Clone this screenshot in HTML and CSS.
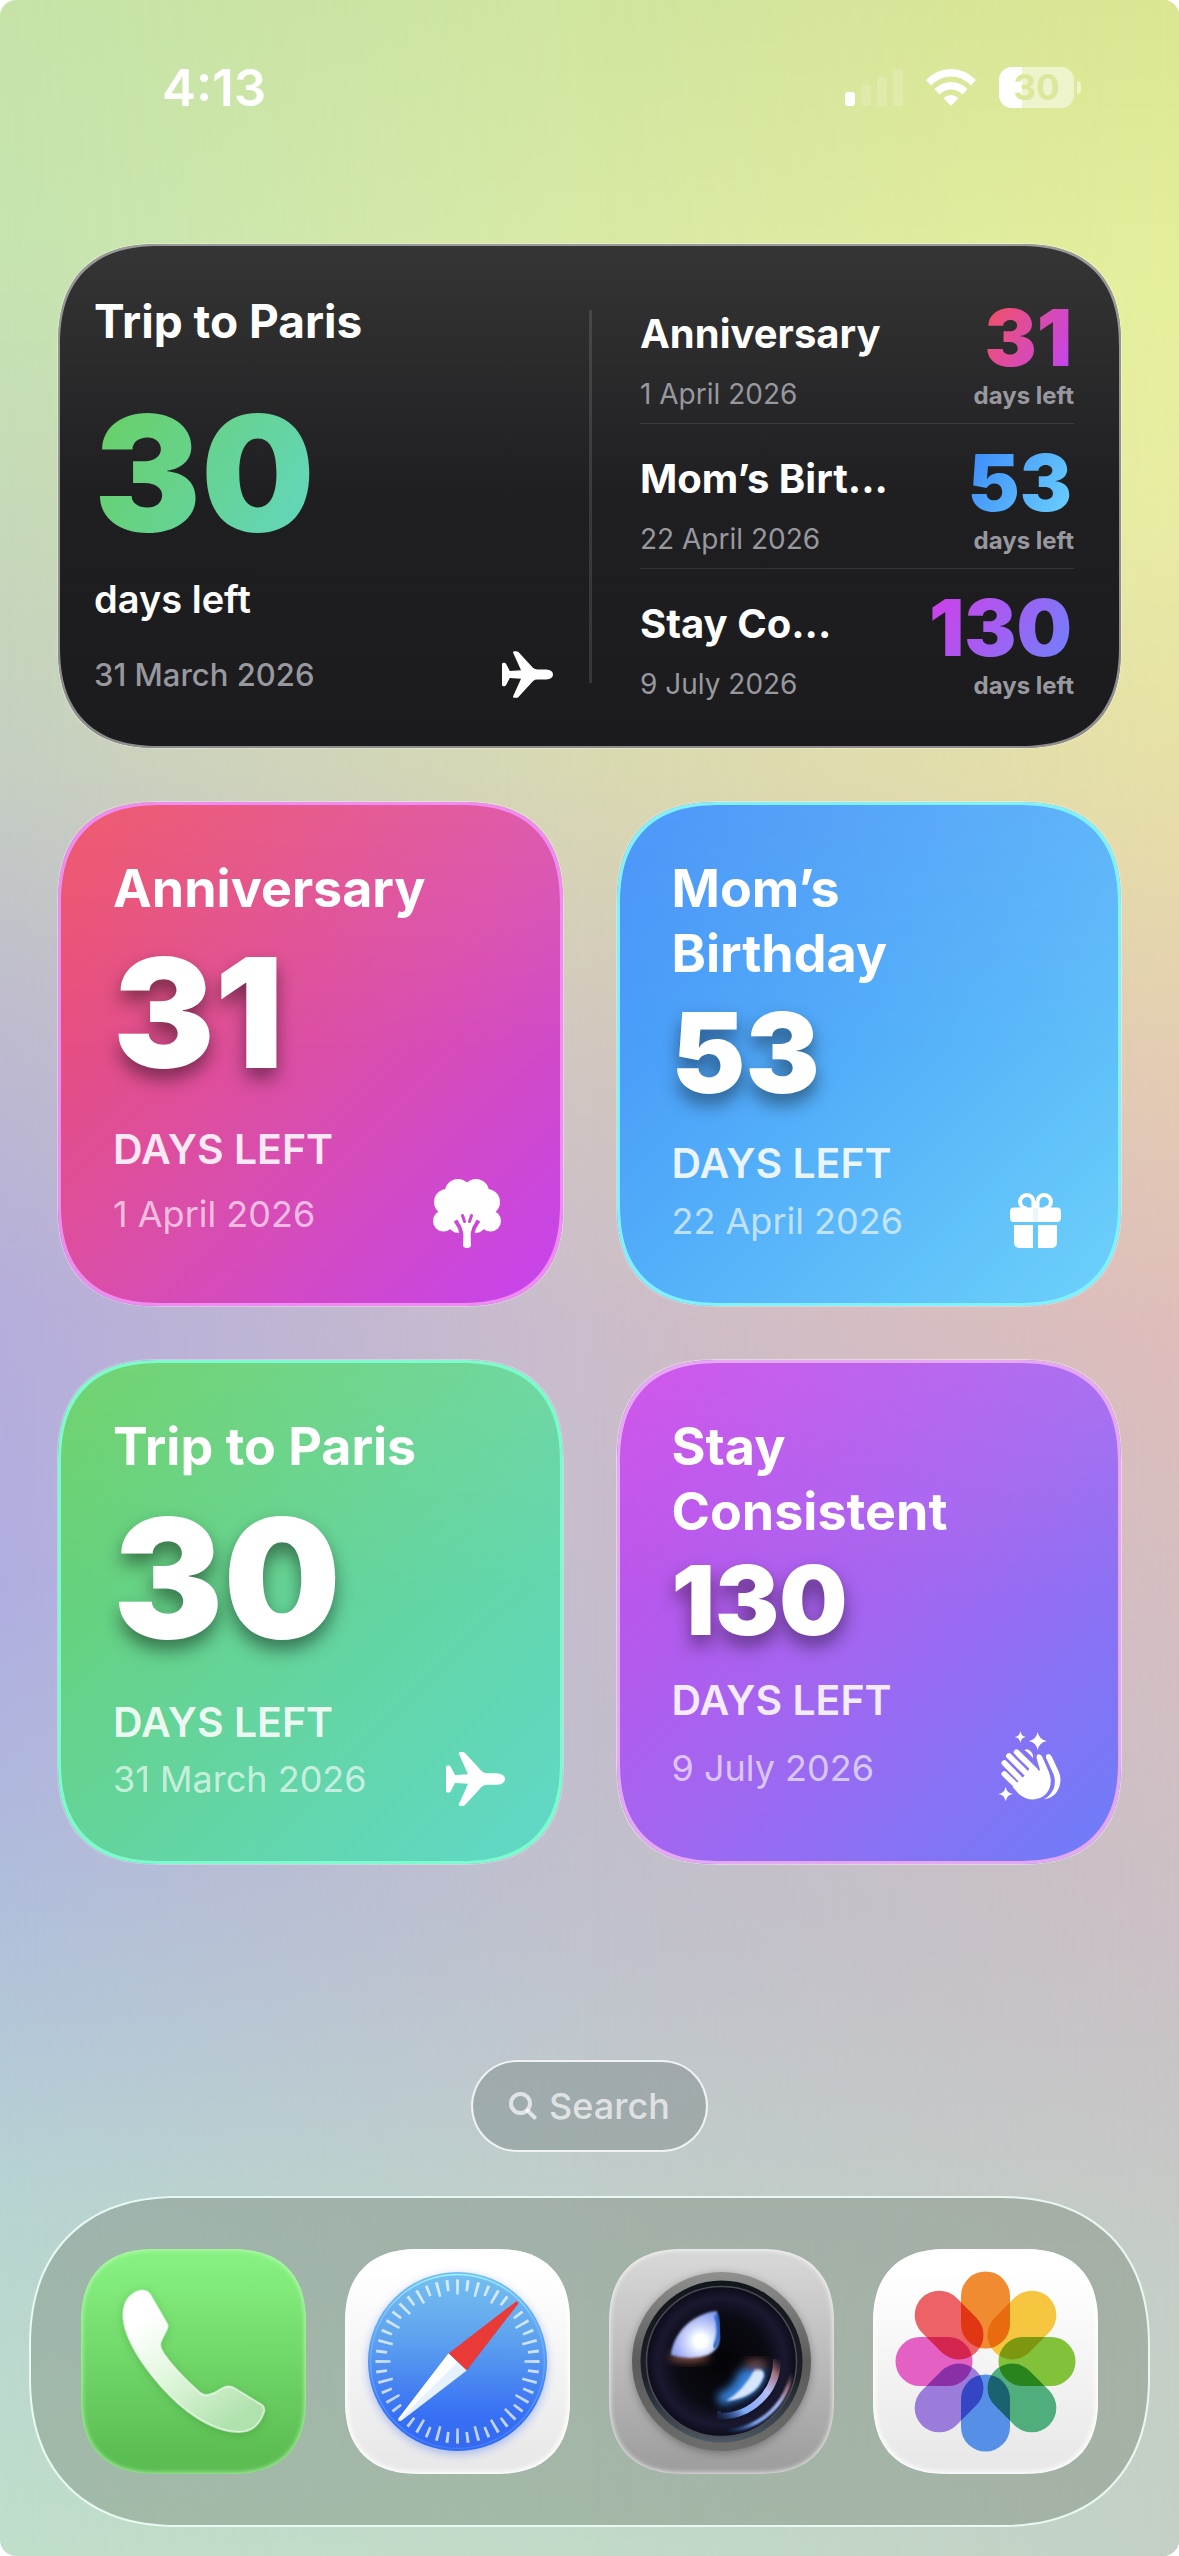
FILE: index.html
```html
<!DOCTYPE html>
<html lang="en">
<head>
<meta charset="utf-8">
<meta name="viewport" content="width=device-width, initial-scale=1">
<title>Home Screen</title>
<link rel="stylesheet" href="styles.css">
</head>
<body>
<svg class="defs" aria-hidden="true">
  <defs>
    <symbol id="plane" viewBox="0 0 59 54">
      <path d="M0 15Q0 13.500 1.500 13.500L3 13.500Q4 13.500 4.800 14.800L9 23L22 22.200L13 2Q12.200 0 14.500 0L16 0Q18 0 19 1L36 19.500Q38 21.200 41 21.200L51 21.200Q59 22 59 27Q59 32 51 32.800L41 32.800Q38 32.800 36 34.500L19 53Q18 54 16 54L14.500 54Q12.200 54 13 52L22 31.800L9 31L4.800 39.200Q4 40.500 3 40.500L1.500 40.500Q0 40.500 0 39Z"/>
    </symbol>
  </defs>
</svg>
<div class="screen">
  <header class="status">
    <time class="clock">4:13</time>
    <div class="indicators">
      <svg class="signal" viewBox="0 0 58 38" role="img" aria-label="Signal: one bar">
        <rect x="0" y="23" width="10" height="14" rx="3"/>
        <g opacity=".16">
          <rect x="16" y="16" width="10" height="21" rx="3"/>
          <rect x="32" y="8" width="10" height="29" rx="3"/>
          <rect x="48" y="0" width="10" height="37" rx="3"/>
        </g>
      </svg>
      <svg class="wifi" viewBox="0 0 50 38" role="img" aria-label="Wi-Fi">
        <path d="M0 11Q11 0 25 0T50 11L45 16.500Q36 7.500 25 7.500T5 16.500Z"/>
        <path d="M8.500 20Q16 13 25 13T41.500 20L36.500 25.500Q31.500 20.500 25 20.500T13.500 25.500Z"/>
        <path d="M17.500 29Q21 26 25 26T32.500 29L25 37Z"/>
      </svg>
      <div class="battery">
        <span class="battery-body">30</span>
        <span class="battery-cap"></span>
      </div>
    </div>
  </header>

  <main class="widgets">
    <section class="widget overview">
      <div class="featured">
        <h2 class="featured-title">Trip to Paris</h2>
        <p class="featured-count"><span class="ink green-ink">30</span></p>
        <p class="featured-unit">days left</p>
        <div class="featured-foot">
          <time class="featured-date">31 March 2026</time>
          <svg class="plane-small" aria-hidden="true"><use href="#plane"/></svg>
        </div>
      </div>
      <ul class="upcoming">
        <li class="event">
          <div class="event-text">
            <h3 class="event-title">Anniversary</h3>
            <time class="event-date">1 April 2026</time>
          </div>
          <div class="event-count">
            <span class="event-number ink pink-ink">31</span>
            <span class="event-unit">days left</span>
          </div>
        </li>
        <li class="event">
          <div class="event-text">
            <h3 class="event-title">Mom’s Birt...</h3>
            <time class="event-date">22 April 2026</time>
          </div>
          <div class="event-count">
            <span class="event-number ink blue-ink">53</span>
            <span class="event-unit">days left</span>
          </div>
        </li>
        <li class="event">
          <div class="event-text">
            <h3 class="event-title">Stay Co...</h3>
            <time class="event-date">9 July 2026</time>
          </div>
          <div class="event-count">
            <span class="event-number ink purple-ink">130</span>
            <span class="event-unit">days left</span>
          </div>
        </li>
      </ul>
    </section>

    <section class="widget card pink">
      <h2 class="card-title">Anniversary</h2>
      <p class="card-count large">31</p>
      <p class="card-unit">DAYS LEFT</p>
      <div class="card-foot">
        <time class="card-date">1 April 2026</time>
        <svg class="icon tree" viewBox="-4 0 76 69" aria-hidden="true">
          <mask id="crown">
            <g fill="#fff">
              <circle cx="25" cy="13" r="13"/><circle cx="43" cy="13" r="13"/>
              <circle cx="14" cy="23" r="13"/><circle cx="54" cy="23" r="13"/>
              <circle cx="10.500" cy="42" r="10.500"/><circle cx="57.500" cy="42" r="10.500"/>
              <circle cx="26" cy="42" r="12"/><circle cx="42" cy="42" r="12"/>
              <rect x="10" y="12" width="48" height="32" rx="8"/>
            </g>
            <path d="M22.500 41.500L27 49L29 57M45.500 41.500L41 49L39 57M34 50V57" fill="none" stroke="#000" stroke-width="4"/>
          </mask>
          <rect width="68" height="69" mask="url(#crown)"/>
          <path d="M30 66Q30 69 34 69T38 66L37.600 56Q38 49 42 43L34 41L26 43Q30 49 30.400 56Z"/>
          <path class="tree-gap" d="M29.500 36.500L31.500 42.500M38.500 36.500L36.500 42.500"/>
        </svg>
      </div>
    </section>

    <section class="widget card blue">
      <h2 class="card-title">Mom’s<br>Birthday</h2>
      <p class="card-count medium">53</p>
      <p class="card-unit">DAYS LEFT</p>
      <div class="card-foot">
        <time class="card-date">22 April 2026</time>
        <svg class="icon gift" viewBox="-2 0 55 55" aria-hidden="true">
          <path d="M23.500 15V8.700A6.700 6.700 0 1 0 17 15.500M27.500 15V8.700A6.700 6.700 0 1 1 34 15.500" fill="none" stroke="#fff" stroke-width="4"/>
          <path d="M4 14.500H23V29H4Q0 29 0 25V18.500Q0 14.500 4 14.500ZM28 14.500H47Q51 14.500 51 18.500V25Q51 29 47 29H28ZM4 32H23V55H10Q4 55 4 49ZM28 32H47V49Q47 55 41 55H28Z"/>
          <rect x="23" y="14.500" width="5" height="14.500" opacity=".85"/>
        </svg>
      </div>
    </section>

    <section class="widget card green">
      <h2 class="card-title">Trip to Paris</h2>
      <p class="card-count huge">30</p>
      <p class="card-unit">DAYS LEFT</p>
      <div class="card-foot">
        <time class="card-date">31 March 2026</time>
        <svg class="icon plane" aria-hidden="true"><use href="#plane"/></svg>
      </div>
    </section>

    <section class="widget card purple">
      <h2 class="card-title">Stay<br>Consistent</h2>
      <p class="card-count small">130</p>
      <p class="card-unit">DAYS LEFT</p>
      <div class="card-foot">
        <time class="card-date">9 July 2026</time>
        <svg class="icon clap" viewBox="48 29 201 228" aria-hidden="true">
          <path d="M121 32Q123 48 138 50Q123 52 121 68Q119 52 104 50Q119 48 121 32ZM173 35Q177 58 201 62Q177 66 173 90Q169 66 146 62Q169 58 173 35ZM77 199Q80 218 99 221Q80 224 77 243Q74 224 55 221Q74 218 77 199Z"/>
          <path d="M110 96L165 150M87 107L150 170M73 128L130 186M73 161L122 208" fill="none" stroke="#fff" stroke-width="17" stroke-linecap="round"/>
          <path d="M152 136L174 150Q181 153 179 145L170 114Q168 102 177 102Q183 102 187 110L207 156Q217 182 208 205Q196 232 165 237Q138 240 116 220L98 200L140 160Z"/>
          <path d="M198 112Q196 102 205 101Q212 101 216 110L238 158Q248 190 228 218Q215 234 192 237Q214 224 222 202Q228 180 220 160ZM133 90Q139 84 146 88Q156 94 159 104L158 114Q147 97 133 90Z"/>
        </svg>
      </div>
    </section>
  </main>

  <button class="search" type="button">
    <svg class="search-icon" viewBox="0 0 28 28" aria-hidden="true">
      <circle cx="11.500" cy="11.500" r="9.500"/><path d="M18.500 18.500L25.500 25.500"/>
    </svg>
    Search
  </button>

  <nav class="dock" aria-label="Dock">
    <a class="app phone" href="#phone" aria-label="Phone">
      <svg class="art" viewBox="0 0 225 225" aria-hidden="true">
        <defs>
          <linearGradient id="handset" x1="0" y1="0" x2=".7" y2="1"><stop offset=".2" stop-color="#fff"/><stop offset=".55" stop-color="#e2f7de"/><stop offset="1" stop-color="#afe2ac"/></linearGradient>
        </defs>
        <path class="handset" fill="url(#handset)" stroke="#fff" stroke-opacity=".6" stroke-width="2" d="M61.600 41.500C52 42 42.300 50 42.300 66C42.300 90 65 120 80 137C100 160 130 183 158 183C172 183 179 175 183 163C184 160 183 158 181 156L153 139C149 137 146 137 142 139L133 144C127 147 122 147 117 142C105 131 92 118 83 105C79 99 78 95 81 90L86 80C87 77 87 76 85 73L70 47C68 43 65 41.500 61.600 41.500Z"/>
      </svg>
    </a>
    <a class="app safari" href="#safari" aria-label="Safari">
      <svg class="art" viewBox="0 0 225 225" aria-hidden="true">
        <defs>
          <linearGradient id="sky" x1="0" y1="0" x2="0" y2="1"><stop offset="0" stop-color="#76c0f0"/><stop offset=".35" stop-color="#60a4ee"/><stop offset=".8" stop-color="#3770f4"/><stop offset="1" stop-color="#3468ee"/></linearGradient>
          <linearGradient id="rim" x1="0" y1="0" x2="0" y2="1"><stop offset="0" stop-color="#9cf4ff"/><stop offset=".3" stop-color="#6fb8ff"/><stop offset="1" stop-color="#3f7cff"/></linearGradient>
        </defs>
        <circle class="dial" cx="112.500" cy="112.500" r="89.500" fill="url(#sky)"/>
        <circle cx="112.500" cy="112.500" r="87" fill="none" stroke="url(#rim)" stroke-width="1.500"/>
        <g fill="none" stroke="#fff" stroke-opacity=".7">
          <circle cx="112.500" cy="112.500" r="74.500" stroke-width="15" pathLength="240" stroke-dasharray="1.400 8.600" stroke-dashoffset=".7"/>
          <circle cx="112.500" cy="112.500" r="76.500" stroke-width="11" pathLength="240" stroke-dasharray="1.400 8.600" stroke-dashoffset="5.700"/>
        </g>
        <path d="M103.500 104.500L171 52.500Q174 52.500 173 55L121.700 121.500Z" fill="#ea3a37"/>
        <path d="M103.500 104.500L121.700 121.500L56 172Q52.500 172.500 53.500 169.500Z" fill="#e6f1ff"/>
        <path d="M103.500 104.500L112.500 113L54 171.500L53.500 169.500Z" fill="#fff"/>
      </svg>
    </a>
    <a class="app camera" href="#camera" aria-label="Camera">
      <svg class="art" viewBox="0 0 225 225" aria-hidden="true">
        <defs>
          <linearGradient id="barrel" x1="0" y1="0" x2="0" y2="1"><stop offset="0" stop-color="#90908e"/><stop offset=".5" stop-color="#5b5b5a"/><stop offset="1" stop-color="#6d6d6c"/></linearGradient>
          <linearGradient id="bezel" x1="0" y1="0" x2="0" y2="1"><stop offset="0" stop-color="#11161b"/><stop offset=".6" stop-color="#1b2026"/><stop offset="1" stop-color="#4d5862"/></linearGradient>
          <radialGradient id="glass"><stop offset="0" stop-color="#040407"/><stop offset=".6" stop-color="#0a0a12"/><stop offset=".85" stop-color="#191830"/><stop offset="1" stop-color="#0d0c1a"/></radialGradient>
          <radialGradient id="flare" gradientUnits="userSpaceOnUse" cx="91.500" cy="92" r="36"><stop offset=".18" stop-color="#fff"/><stop offset=".3" stop-color="#dfe9ff"/><stop offset=".65" stop-color="#a8b2f4"/><stop offset="1" stop-color="#6b93ea"/></radialGradient>
          <linearGradient id="glint" gradientUnits="userSpaceOnUse" x1="172" y1="112" x2="108" y2="172"><stop offset="0" stop-color="#7b4c4a" stop-opacity="0"/><stop offset=".15" stop-color="#a07480"/><stop offset=".35" stop-color="#b5c0fa"/><stop offset=".7" stop-color="#7fa8f6"/><stop offset="1" stop-color="#1c5cc0" stop-opacity="0"/></linearGradient>
          <filter id="soft"><feGaussianBlur stdDeviation="1.200"/></filter>
          <filter id="softer" x="-50%" y="-50%" width="200%" height="200%"><feGaussianBlur stdDeviation="4"/></filter>
        </defs>
        <circle class="barrel" cx="112.500" cy="112.500" r="89.500" fill="url(#barrel)"/>
        <circle cx="112.500" cy="112.500" r="81" fill="url(#bezel)"/>
        <circle cx="112.500" cy="112.500" r="75" fill="url(#glass)" stroke="#4b4b55" stroke-width="1.500"/>
        <ellipse cx="80" cy="108" rx="20" ry="5" fill="#8b5446" filter="url(#softer)"/>
        <path d="M108 62C84 64 64 84 62 106Q82 112 99 106Q112 100 110 84Z" fill="url(#flare)" filter="url(#soft)"/>
        <path d="M107 66Q113 84 105 99" fill="none" stroke="#2b66cf" stroke-width="4" filter="url(#soft)"/>
        <path d="M130 122Q152 112 156 122Q156 148 113 156Q106 152 110 144Q124 140 130 122Z" fill="#357fd8" filter="url(#softer)"/>
        <path d="M146 120Q155 118 155 127Q148 149 117 152Q134 142 146 120Z" fill="#d5e6ff" filter="url(#soft)"/>
        <ellipse cx="147" cy="115" rx="12" ry="4" fill="#7d4a40" filter="url(#softer)"/>
        <g fill="none" stroke="url(#glint)">
          <path d="M168 110A56 56 0 0 1 108 166" stroke-width="8"/>
          <path d="M184 108A71 71 0 0 1 106 182" stroke-width="4" filter="url(#soft)"/>
        </g>
        <path d="M163 112A51 51 0 0 1 112 163" fill="none" stroke="#12152e" stroke-width="2"/>
      </svg>
    </a>
    <a class="app photos" href="#photos" aria-label="Photos">
      <svg class="art petals" viewBox="0 0 225 225" aria-hidden="true">
        <g class="petal"><rect x="88" y="22.500" width="49" height="77" rx="24.500" fill="#f18b31"/></g>
        <g class="petal"><rect x="88" y="22.500" width="49" height="77" rx="24.500" fill="#f6c640" transform="rotate(45 112.500 112.500)"/></g>
        <g class="petal"><rect x="88" y="22.500" width="49" height="77" rx="24.500" fill="#82c23a" transform="rotate(90 112.500 112.500)"/></g>
        <g class="petal"><rect x="88" y="22.500" width="49" height="77" rx="24.500" fill="#50ae7c" transform="rotate(135 112.500 112.500)"/></g>
        <g class="petal"><rect x="88" y="22.500" width="49" height="77" rx="24.500" fill="#5590e6" transform="rotate(180 112.500 112.500)"/></g>
        <g class="petal"><rect x="88" y="22.500" width="49" height="77" rx="24.500" fill="#9c7cda" transform="rotate(225 112.500 112.500)"/></g>
        <g class="petal"><rect x="88" y="22.500" width="49" height="77" rx="24.500" fill="#e460c2" transform="rotate(270 112.500 112.500)"/></g>
        <g class="petal"><rect x="88" y="22.500" width="49" height="77" rx="24.500" fill="#ed6266" transform="rotate(315 112.500 112.500)"/></g>
      </svg>
    </a>
  </nav>
</div>
</body>
</html>
```
FILE: styles.css
```css
* {
  box-sizing: border-box;
  margin: 0;
  padding: 0;
}

body {
  background: #fff;
  font-family: Inter, "Liberation Sans", sans-serif;
  color: #fff;
}

.defs {
  position: absolute;
  width: 0;
  height: 0;
}

/* Wallpaper: three vertical colour runs blended left to right */
.screen {
  position: relative;
  isolation: isolate;
  overflow: hidden;
  min-height: 100vh;
  display: flex;
  flex-direction: column;
  padding-bottom: 29px;
  border-radius: 16px;
  background: linear-gradient(#c6e3a8, #c6e5b0 9%, #c6cfc2 30%, #bfbdce 39%, #b6aedb 51%, #b0aee1 62%, #b0bcdc 73%, #b4c8d8 80%, #b8d4d2 86%, #c0dfca);
}

.screen::before,
.screen::after {
  content: "";
  position: absolute;
  inset: 0;
  z-index: -1;
}

.screen::before {
  background: linear-gradient(#d0e5a0, #d9eaa6 10%, #d9d9b2 30%, #d0c6c0 42%, #cbbdcb 52%, #c3bdcc 68%, #c0c2cc 76%, #c0c8cc 81%, #c0ceca 86%, #c2dac8);
  mask-image: linear-gradient(to right, transparent, #000 50%);
}

.screen::after {
  background: linear-gradient(#dce592, #e6ef9c 12%, #e8eca2 20%, #e6dda8 32%, #e4cdb2 41%, #debdba 52%, #d2bec2 65%, #cac0c5 76%, #c7c6c6 83%, #c4cec6 90%, #c3d0c6);
  mask-image: linear-gradient(to right, transparent 50%, #000);
}

/* Status bar */
.status {
  height: 244px;
  padding: 62px 98px 0 162px;
  display: flex;
  justify-content: space-between;
  align-items: flex-start;
}

.clock {
  font-size: 51px;
  font-weight: 600;
  line-height: 52px;
}

.indicators {
  display: flex;
  align-items: center;
  gap: 23px;
  padding-top: 5px;
}

.signal,
.wifi {
  height: 38px;
  fill: #fff;
}

.signal { width: 58px; }
.wifi { width: 50px; }

.battery {
  display: flex;
  align-items: center;
  gap: 3px;
}

.battery-body {
  width: 75px;
  height: 41px;
  border-radius: 13px;
  background: linear-gradient(to right, #fff 23px, rgba(255, 255, 255, .5) 23px);
  color: #dde79b;
  font-size: 35px;
  font-weight: 700;
  line-height: 41px;
  text-align: center;
}

.battery-cap {
  width: 4px;
  height: 13px;
  border-radius: 0 4px 4px 0;
  background: rgba(255, 255, 255, .5);
}

/* Widgets */
.widgets {
  display: grid;
  grid-template-columns: 1fr 1fr;
  grid-auto-rows: minmax(504px, auto);
  gap: 54px;
  padding: 0 58px;
}

.widget {
  border-radius: 84px;
}

@supports (corner-shape: superellipse(1.3)) {
  .widget {
    border-radius: 102px;
    corner-shape: superellipse(1.3);
  }
}

.overview {
  grid-column: span 2;
  display: grid;
  grid-template-columns: 531px 1fr;
  background: linear-gradient(#353536, #1f1f21 50%, #1b1b1d);
  box-shadow: inset 0 0 0 2px rgba(255, 255, 255, .5), 0 0 0 1px rgba(255, 255, 255, .3);
}

.featured {
  display: flex;
  flex-direction: column;
  padding: 49px 36px 50px;
}

.featured-title {
  font-size: 46px;
  font-weight: 700;
  line-height: 56px;
}

.featured-count {
  flex: 1;
  display: flex;
  align-items: center;
  padding-top: 20px;
  font-size: 160px;
  font-weight: 900;
  line-height: 160px;
}

.featured-unit {
  font-size: 38px;
  font-weight: 600;
  line-height: 46px;
  margin-bottom: 29px;
}

.featured-foot,
.card-foot {
  display: flex;
  justify-content: space-between;
  align-items: center;
}

.featured-date {
  color: #98989f;
  font-size: 31px;
  font-weight: 500;
  line-height: 36px;
}

.plane-small {
  width: 51px;
  height: 47px;
  fill: #fff;
}

.ink {
  background-clip: text;
  -webkit-background-clip: text;
  color: transparent;
}

.green-ink { background-image: linear-gradient(120deg, #68d06a 10%, #63d6ba 90%); }
.pink-ink { background-image: linear-gradient(120deg, #f0506c 10%, #c545ea 90%); }
.blue-ink { background-image: linear-gradient(120deg, #4090fa 10%, #68ccfc 90%); }
.purple-ink { background-image: linear-gradient(120deg, #c944ea 10%, #777cfa 90%); }

.upcoming {
  list-style: none;
  align-self: center;
  position: relative;
  padding: 0 47px 0 51px;
}

.upcoming::before {
  content: "";
  position: absolute;
  left: 0;
  top: 31px;
  bottom: 31px;
  width: 3px;
  background: rgba(255, 255, 255, .12);
}

.event {
  height: 145px;
  display: flex;
  justify-content: space-between;
  align-items: flex-end;
  padding-bottom: 13px;
  border-bottom: 1px solid rgba(255, 255, 255, .1);
}

.event:last-child {
  border-bottom-color: transparent;
}

.event-text,
.event-count {
  display: flex;
  flex-direction: column;
}

.event-text {
  gap: 19px;
}

.event-title {
  font-size: 40px;
  font-weight: 700;
  line-height: 50px;
  white-space: nowrap;
}

.event-date {
  color: #98989f;
  font-size: 28px;
  font-weight: 400;
  line-height: 32px;
}

.event-count {
  align-items: flex-end;
  gap: 5px;
}

.event-number {
  padding-right: 2px;
  font-size: 78px;
  font-weight: 900;
  line-height: 78px;
}

.event-unit {
  color: #98989f;
  font-size: 24px;
  font-weight: 700;
  line-height: 28px;
}

.card {
  display: flex;
  flex-direction: column;
  padding: 54px 58px 58px 55px;
}

.pink {
  background: linear-gradient(rgba(255, 255, 255, .08), transparent 50%), linear-gradient(135deg, #ec4e68 6%, #da4eaa 53%, #c744ea 96%);
  box-shadow: inset 0 0 0 3px #ee8cf2, 0 0 0 1px rgba(255, 255, 255, .3);
}

.blue {
  background: linear-gradient(rgba(255, 255, 255, .08), transparent 50%), linear-gradient(135deg, #4292f8 8%, #54b0f9 52%, #6dd0fa 98%);
  box-shadow: inset 0 0 0 3px #80f2ff, 0 0 0 1px rgba(255, 255, 255, .3);
}

.green {
  background: linear-gradient(rgba(255, 255, 255, .08), transparent 50%), linear-gradient(135deg, #66d06a 8%, #64d49a 50%, #60d8c6 96%);
  box-shadow: inset 0 0 0 3px #7dfbcf, 0 0 0 1px rgba(255, 255, 255, .3);
}

.purple {
  background: linear-gradient(rgba(255, 255, 255, .08), transparent 50%), linear-gradient(135deg, #c94cea 6%, #a266f0 52%, #707cf8 96%);
  box-shadow: inset 0 0 0 3px #e6a8f6, 0 0 0 1px rgba(255, 255, 255, .4);
}

.card-title {
  font-size: 52px;
  font-weight: 700;
  line-height: 65px;
}

.card-count {
  flex: 1;
  display: flex;
  align-items: center;
  font-weight: 900;
  line-height: 1;
  text-shadow: 0 10px 18px rgba(0, 0, 0, .45);
}

.small { font-size: 96px; }
.medium { font-size: 111px; }
.large { font-size: 152px; }
.huge { font-size: 165px; }

.card-unit {
  margin: 20px 0 6px;
  color: rgba(255, 255, 255, .88);
  font-size: 41px;
  font-weight: 600;
  line-height: 48px;
}

.card-date {
  color: rgba(255, 255, 255, .65);
  font-size: 36px;
  font-weight: 400;
  line-height: 42px;
}

.icon {
  fill: #fff;
}

.tree { width: 76px; height: 69px; }
.tree-gap { fill: none; stroke: #cc49d2; stroke-width: 3; stroke-linecap: round; }
.gift { width: 55px; height: 55px; }
.plane { width: 59px; height: 54px; }
.clap { width: 67px; height: 76px; }

/* Search pill */
.search {
  align-self: center;
  margin: 196px 0 44px;
  height: 92px;
  padding: 0 36px;
  display: flex;
  align-items: center;
  gap: 12px;
  border: 2px solid rgba(255, 255, 255, .85);
  border-radius: 46px;
  background: rgba(112, 124, 124, .4);
  color: rgba(255, 255, 255, .68);
  font-family: inherit;
  font-size: 36px;
  font-weight: 500;
}

.search-icon {
  width: 28px;
  height: 28px;
  fill: none;
  stroke: currentColor;
  stroke-width: 4;
  stroke-linecap: round;
}

/* Dock */
.dock {
  display: flex;
  justify-content: space-between;
  margin: 0 29px;
  padding: 51px 50px;
  border: 2px solid rgba(240, 255, 252, .9);
  border-radius: 133px;
  background: rgba(110, 124, 108, .36);
}

@supports (corner-shape: superellipse(1.3)) {
  .dock {
    border-radius: 150px;
    corner-shape: superellipse(1.2);
  }
}

.app {
  width: 225px;
  height: 225px;
  border-radius: 62px;
}

@supports (corner-shape: superellipse(1.3)) {
  .app {
    border-radius: 76px;
    corner-shape: superellipse(1.3);
  }
}

.art {
  display: block;
  width: 100%;
}

.phone {
  background: linear-gradient(#86f180 5%, #5bbd52 92%);
  box-shadow: inset 0 0 5px 1px rgba(200, 255, 195, .8);
}

.safari,
.photos {
  background: linear-gradient(#fff 10%, #e9e9ea 92%);
  box-shadow: inset 0 0 5px 2px #fff;
}

.camera {
  background: linear-gradient(#d6d6d6 5%, #9f9f9f 95%);
  box-shadow: inset 0 0 5px 1px rgba(255, 255, 255, .8);
}

.handset { filter: drop-shadow(0 2px 4px rgba(40, 120, 40, .3)); }
.dial { filter: drop-shadow(0 3px 5px rgba(60, 110, 240, .4)); }
.barrel { filter: drop-shadow(0 2px 4px rgba(0, 0, 0, .3)); }
.petals { isolation: isolate; }
.petal { mix-blend-mode: multiply; }
```
